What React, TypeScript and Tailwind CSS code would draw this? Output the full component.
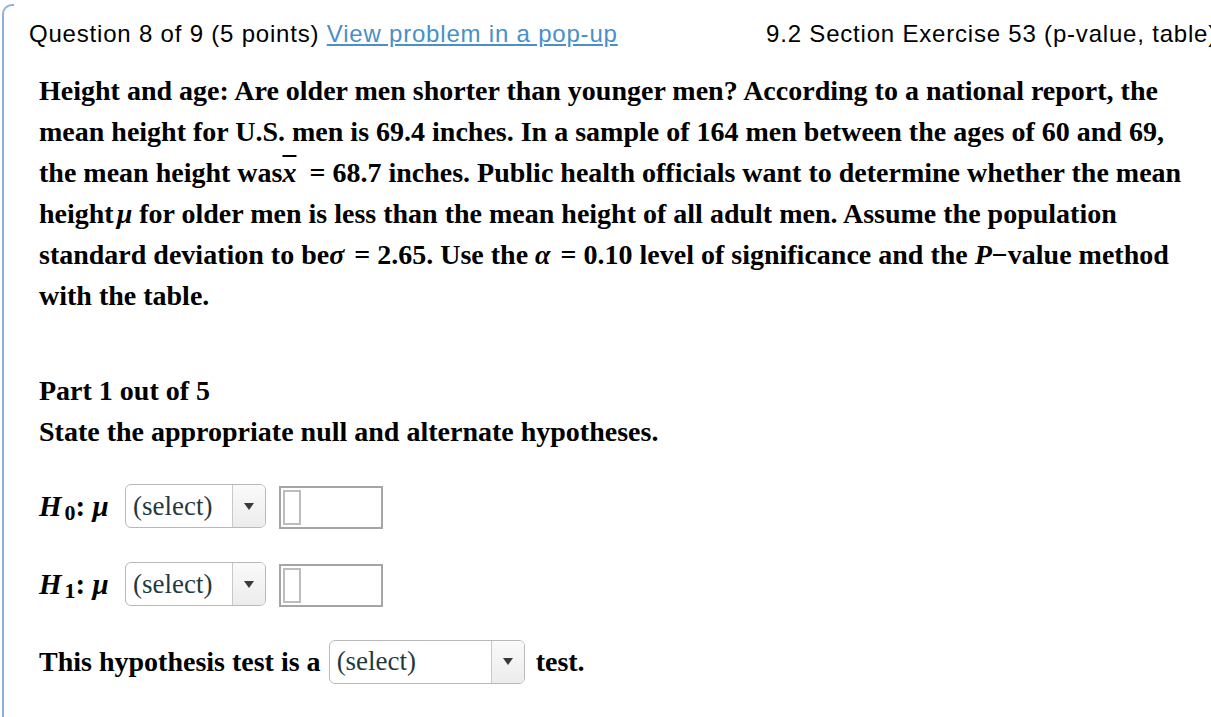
import React from 'react';

const serif = { fontFamily: '"Liberation Serif", "Times New Roman", serif' };

const Select = ({ width }: { width: string }) => (
    <div className={`inline-flex items-stretch h-[44px] ${width} border border-[#b9b9b9] rounded-[6px] bg-white overflow-hidden align-middle`}>
        <div className="flex-1 flex items-center pl-[7px] text-[27px] text-[#1f3a3d] font-normal" style={serif}>
            (select)
        </div>
        <div className="w-[33px] flex items-center justify-center border-l border-[#c8c8c8] bg-gradient-to-b from-[#fafafa] to-[#ececec]">
            <svg width="10" height="7" viewBox="0 0 10 7">
                <path d="M0 0 L10 0 L5 7 Z" fill="#3a3a3a" />
            </svg>
        </div>
    </div>
);

const AnswerBox = () => (
    <div className="inline-flex h-[43px] w-[104px] border-2 border-[#a5a5a5] bg-white p-[2px] align-middle">
        <div className="w-[18px] h-full border-2 border-[#bdbdbd]" />
    </div>
);

const Hypothesis = ({ sub }: { sub: string }) => (
    <div className="flex items-center h-[44px]">
        <span className="font-bold italic text-[29px] text-black w-[86px] whitespace-nowrap" style={serif}>
            H<sub className="not-italic text-[22px] relative top-[4px] ml-[3px]">{sub}</sub>
            <span className="not-italic">:</span> μ
        </span>
        <Select width="w-[141px]" />
        <div className="ml-[13px]">
            <AnswerBox />
        </div>
    </div>
);

export default function App() {
    return (
        <div className="w-[1211px] h-[717px] bg-white overflow-hidden relative">
            {/* left frame edge */}
            <div className="absolute left-[2px] top-[4px] bottom-0 w-[12px] border-l-2 border-t-2 border-[#8fb0dc] rounded-tl-[10px]" />

            <div className="flex items-center justify-between pl-[29px] pt-[18px] h-[32px] box-content whitespace-nowrap text-[24px] tracking-[0.8px] text-black" style={{ fontFamily: '"Liberation Sans", Arial, sans-serif' }}>
                <div>
                    Question 8 of 9 (5 points){' '}
                    <span className="text-[#4a8fc7] underline underline-offset-2">View problem in a pop-up</span>
                </div>
                <div className="mr-[-6px]">9.2 Section Exercise 53 (p-value, table)</div>
            </div>

            <div className="pl-[39px] pt-[20px] font-bold text-[28px] leading-[41px] text-black whitespace-nowrap" style={serif}>
                <div>Height and age: Are older men shorter than younger men? According to a national report, the</div>
                <div>mean height for U.S. men is 69.4 inches. In a sample of 164 men between the ages of 60 and 69,</div>
                <div>
                    the mean height was<span className="italic overline">x</span>
                    <span className="ml-[13px]">= 68.7 inches. Public health officials want to determine whether the mean</span>
                </div>
                <div>
                    height<span className="italic ml-[3px]">μ</span> for older men is less than the mean height of all adult men. Assume the population
                </div>
                <div>
                    standard deviation to be<span className="italic">σ</span>
                    <span className="ml-[10px]">= 2.65. Use the </span>
                    <span className="italic">α</span>
                    <span className="ml-[10px]">= 0.10 level of significance and the </span>
                    <span className="italic">P</span>−value method
                </div>
                <div>with the table.</div>

                <div className="mt-[54px]">Part 1 out of 5</div>
                <div>State the appropriate null and alternate hypotheses.</div>

                <div className="mt-[32px] flex flex-col gap-[34px]">
                    <Hypothesis sub="0" />
                    <Hypothesis sub="1" />
                    <div className="flex items-center h-[44px] mt-[-1px]">
                        <span>This hypothesis test is a</span>
                        <span className="ml-[8px]">
                            <Select width="w-[196px]" />
                        </span>
                        <span className="ml-[11px]">test.</span>
                    </div>
                </div>
            </div>
        </div>
    );
}
